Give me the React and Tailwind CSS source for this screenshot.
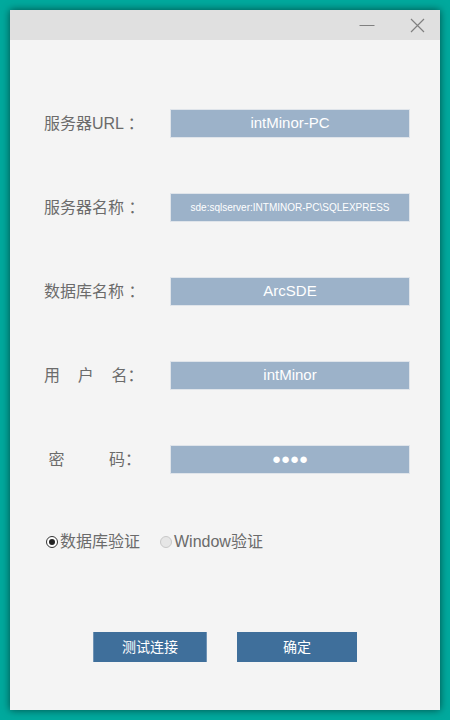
import React, { useState } from 'react';

const font = { fontFamily: '"Liberation Sans", "Noto Sans CJK SC", sans-serif' };

function Field({ label, value, small }) {
  return (
    <div className="flex items-center h-[29px]">
      <div className="w-[160px] shrink-0 pl-[34px] text-[16px] text-[#6b6b6b] whitespace-pre">{label}</div>
      <div className="w-[240px] shrink-0 h-[29px] bg-[#9cb2c9] border border-[#dfe4ea] flex items-center justify-center text-white">
        <span className={small ? 'text-[10px]' : 'text-[15px]'}>{value}</span>
      </div>
    </div>
  );
}

export default function App() {
  const [mode, setMode] = useState('db');

  return (
    <div className="w-[450px] h-[720px] bg-[#00a99d] p-[10px]" style={font}>
      <div className="w-[430px] h-[700px] bg-[#f4f4f4] flex flex-col shadow-[0_0_8px_rgba(0,0,0,0.55)]">
        {/* Title bar */}
        <div className="h-[30px] bg-[#e0e0e0] flex items-center justify-end">
          <button className="w-[46px] h-[30px] flex items-center justify-center">
            <svg width="16" height="16" viewBox="0 0 16 16">
              <line x1="0.5" y1="8.5" x2="15.5" y2="8.5" stroke="#808080" strokeWidth="1" />
            </svg>
          </button>
          <button className="w-[46px] h-[30px] ml-[4px] flex items-center justify-center">
            <svg width="15" height="15" viewBox="0 0 15 15">
              <path d="M1 1L14 14M14 1L1 14" stroke="#808080" strokeWidth="1.2" />
            </svg>
          </button>
        </div>

        {/* Form */}
        <div className="flex flex-col gap-[55px] pt-[69px]">
          <Field label="服务器URL ：" value="intMinor-PC" />
          <Field label="服务器名称 ：" value="sde:sqlserver:INTMINOR-PC\SQLEXPRESS" small />
          <Field label="数据库名称 ：" value="ArcSDE" />
          <Field label={'用    户    名：'} value="intMinor" />
          <Field label={' 密          码：'} value="●●●●" />
        </div>

        {/* Radios */}
        <div className="flex items-center mt-[56px] pl-[36px] text-[16px] text-[#6b6b6b]">
          <label className="flex items-center cursor-pointer" onClick={() => setMode('db')}>
            <span className={'w-[12px] h-[12px] rounded-full border flex items-center justify-center ' + (mode === 'db' ? 'border-[#333] bg-white' : 'border-[#c8c8c8] bg-[#e6e6e6]')}>
              {mode === 'db' && <span className="w-[6px] h-[6px] rounded-full bg-[#222]" />}
            </span>
            <span className="ml-[2px]">数据库验证</span>
          </label>
          <label className="flex items-center cursor-pointer ml-[20px]" onClick={() => setMode('win')}>
            <span className={'w-[12px] h-[12px] rounded-full border flex items-center justify-center ' + (mode === 'win' ? 'border-[#333] bg-white' : 'border-[#c8c8c8] bg-[#e6e6e6]')}>
              {mode === 'win' && <span className="w-[6px] h-[6px] rounded-full bg-[#222]" />}
            </span>
            <span className="ml-[2px]">Window验证</span>
          </label>
        </div>

        {/* Buttons */}
        <div className="flex mt-[78px] pl-[83px] gap-[30px]">
          <button className="w-[114px] h-[30px] bg-[#3f6f9b] border-l border-r border-[#6f93b5] text-white text-[14px] flex items-center justify-center">
            测试连接
          </button>
          <button className="w-[120px] h-[30px] bg-[#3f6f9b] text-white text-[14px] flex items-center justify-center">
            确定
          </button>
        </div>
      </div>
    </div>
  );
}
